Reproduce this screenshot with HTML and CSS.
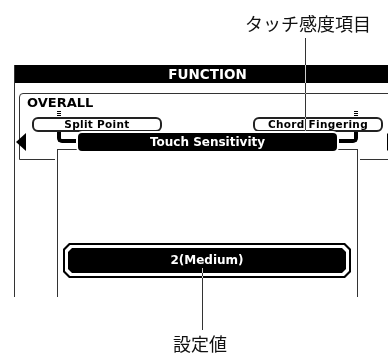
FILE: index.html
```html
<!DOCTYPE html>
<html lang="ja">
<head>
  <meta charset="UTF-8">
  <meta name="viewport" content="width=device-width, initial-scale=1.0">
  <title>FUNCTION - Touch Sensitivity</title>
  <link rel="stylesheet" href="styles.css">
</head>
<body>
  <p class="note note-top">タッチ感度項目</p>

  <div class="lcd">
    <div class="lcd-title">FUNCTION</div>
    <div class="overall">
      <div class="overall-label">OVERALL</div>
      <div class="marks">
        <span class="mark"></span>
        <span class="mark"></span>
      </div>
      <div class="tabs">
        <div class="tab">Split Point</div>
        <div class="tab">Chord Fingering</div>
      </div>
      <div class="current">
        <span class="link link-left"></span>
        <div class="current-name">Touch Sensitivity</div>
        <span class="link link-right"></span>
      </div>
      <div class="panel">
        <div class="value">
          <div class="value-ring">
            <div class="value-text">2(Medium)</div>
          </div>
        </div>
      </div>
    </div>
    <span class="arrow arrow-left"></span>
    <span class="arrow arrow-right"></span>
  </div>

  <p class="note note-bottom">設定値</p>

  <span class="leader leader-top"></span>
  <span class="leader leader-bottom"></span>
</body>
</html>
```

FILE: styles.css
```css
body {
  margin: 0;
  width: 388px;
  height: 356px;
  position: relative;
  overflow: hidden;
  background-color: #fff;
  color: #000;
  font-family: "DejaVu Sans", "Liberation Sans", sans-serif;
}

.note {
  margin: 0;
  font-family: "Noto Sans CJK JP", sans-serif;
  font-size: 18px;
  line-height: 20px;
  color: #111;
}

.note-top {
  padding: 13px 0 0 245px;
}

.note-bottom {
  padding: 37px 0 0 173px;
  line-height: 18px;
}

/* LCD screen */
.lcd {
  position: relative;
  margin: 32px 0 0 14px;
  width: 385px;
  height: 232px;
  border-left: 1px solid #333;
  border-right: 1px solid #333;
  overflow: hidden;
}

.lcd-title {
  height: 18px;
  background-color: #000;
  color: #fff;
  font-size: 13.5px;
  font-weight: bold;
  line-height: 18px;
  text-align: center;
}

.overall {
  margin: 10px 4px 0;
  height: 65px;
  border: 1px solid #333;
  border-radius: 4px 4px 0 0;
}

.overall-label {
  padding: 2px 0 0 7px;
  font-size: 13px;
  font-weight: bold;
  line-height: 14px;
}

.marks {
  display: flex;
  justify-content: space-between;
  margin: 1px 0 0 37px;
  width: 301px;
}

.mark {
  width: 4px;
  height: 5px;
  background: repeating-linear-gradient(#000 0 1px, transparent 1px 2px);
}

.tabs {
  display: flex;
  justify-content: space-between;
  margin: 1px 0 0 12px;
  width: 351px;
}

.tab {
  box-sizing: border-box;
  width: 130px;
  height: 15px;
  border: 2px solid #222;
  border-radius: 6px;
  font-size: 10.5px;
  font-weight: bold;
  line-height: 11px;
  letter-spacing: 0.3px;
  text-align: center;
}

.current {
  position: relative;
  z-index: 1;
  display: flex;
  align-items: flex-start;
  margin-left: 37px;
  width: 301px;
  height: 19px;
}

.link {
  flex: none;
  box-sizing: border-box;
  width: 19px;
  height: 11px;
  border-bottom: 4px solid #000;
}

.link-left {
  margin-right: 2px;
  border-left: 4px solid #000;
  border-bottom-left-radius: 5px;
}

.link-right {
  margin-left: 2px;
  border-right: 4px solid #000;
  border-bottom-right-radius: 5px;
}

.current-name {
  width: 259px;
  height: 18px;
  margin-top: 1px;
  background-color: #000;
  color: #fff;
  border-radius: 4px;
  box-shadow: 0 0 0 2px #fff;
  font-size: 12px;
  font-weight: bold;
  line-height: 18px;
  text-align: center;
}

.panel {
  box-sizing: border-box;
  margin: -2px 0 0 37px;
  width: 301px;
  height: 148px;
  padding: 93px 0 0 5px;
  border: 1px solid #333;
  border-bottom: 0;
  background-color: #fff;
  box-shadow: -2px 0 0 #fff, 2px 0 0 #fff;
}

.value {
  box-sizing: border-box;
  width: 288px;
  height: 35px;
  padding: 2px;
  background-color: #000;
  clip-path: polygon(6px 0, calc(100% - 6px) 0, 100% 6px, 100% calc(100% - 6px), calc(100% - 6px) 100%, 6px 100%, 0 calc(100% - 6px), 0 6px);
}

.value-ring {
  box-sizing: border-box;
  height: 100%;
  padding: 3px;
  background-color: #fff;
  clip-path: polygon(5px 0, calc(100% - 5px) 0, 100% 5px, 100% calc(100% - 5px), calc(100% - 5px) 100%, 5px 100%, 0 calc(100% - 5px), 0 5px);
}

.value-text {
  height: 100%;
  background-color: #000;
  color: #fff;
  clip-path: polygon(4px 0, calc(100% - 4px) 0, 100% 4px, 100% calc(100% - 4px), calc(100% - 4px) 100%, 4px 100%, 0 calc(100% - 4px), 0 4px);
  font-size: 12px;
  font-weight: bold;
  line-height: 25px;
  text-align: center;
}

.arrow {
  position: absolute;
  top: 68px;
  width: 10px;
  height: 18px;
  background-color: #000;
}

.arrow-left {
  left: 1px;
  clip-path: polygon(0 50%, 100% 0, 100% 100%);
}

.arrow-right {
  left: 372px;
  clip-path: polygon(100% 50%, 0 0, 0 100%);
}

/* callout lines */
.leader {
  position: absolute;
  border: 0 solid #ccc;
  mix-blend-mode: difference;
}

.leader-top {
  left: 270px;
  top: 38px;
  width: 35px;
  height: 104px;
  border-right-width: 1px;
  border-bottom-width: 1px;
}

.leader-bottom {
  left: 202px;
  top: 268px;
  height: 62px;
  border-left-width: 1px;
}
```
